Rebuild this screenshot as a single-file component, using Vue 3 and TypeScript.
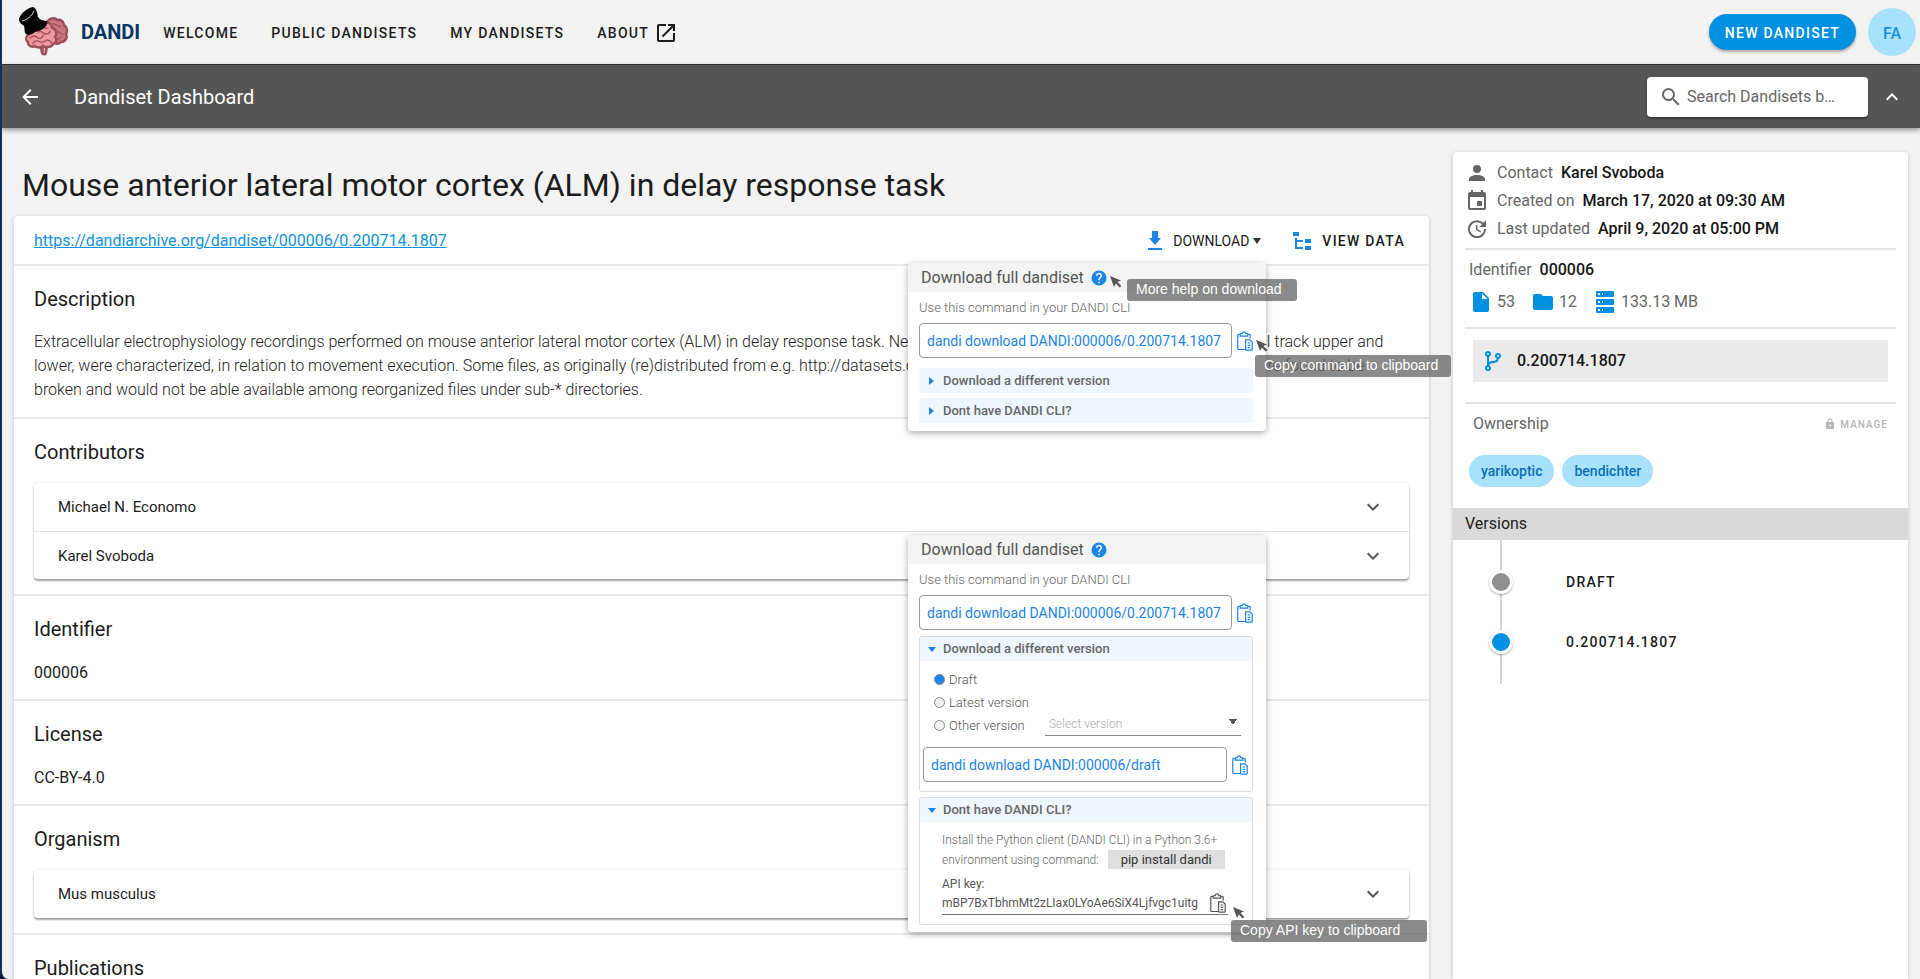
<script setup lang="ts">
import { ref } from 'vue'

const icons = {
  openInNew: 'M14,3V5H17.59L7.76,14.83L9.17,16.24L19,6.41V10H21V3M19,19H5V5H12V3H5C3.89,3 3,3.9 3,5V19A2,2 0 0,0 5,21H19A2,2 0 0,0 21,19V12H19V19Z',
  arrowLeft: 'M20,11V13H8L13.5,18.5L12.08,19.92L4.16,12L12.08,4.08L13.5,5.5L8,11H20Z',
  magnify: 'M9.5,3A6.5,6.5 0 0,1 16,9.5C16,11.11 15.41,12.59 14.44,13.73L14.71,14H15.5L20.5,19L19,20.5L14,15.5V14.71L13.73,14.44C12.59,15.41 11.11,16 9.5,16A6.5,6.5 0 0,1 3,9.5A6.5,6.5 0 0,1 9.5,3M9.5,5C7,5 5,7 5,9.5C5,12 7,14 9.5,14C12,14 14,12 14,9.5C14,7 12,5 9.5,5Z',
  chevronUp: 'M7.41,15.41L12,10.83L16.59,15.41L18,14L12,8L6,14L7.41,15.41Z',
  chevronDown: 'M7.41,8.58L12,13.17L16.59,8.58L18,10L12,16L6,10L7.41,8.58Z',
  download: 'M5,21H19V19H5M18,9H15V2H9V9H6L12,16L18,9Z',
  fileTree: 'M3,3H9V7H3V3M15,10H21V14H15V10M15,17H21V21H15V17M13,13H7V18H13V20H7L5,20V9H7V11H13V13Z',
  help: 'M15.07,11.25L14.17,12.17C13.45,12.89 13,13.5 13,15H11V14.5C11,13.39 11.45,12.39 12.17,11.67L13.41,10.41C13.78,10.05 14,9.55 14,9C14,7.89 13.1,7 12,7A2,2 0 0,0 10,9H8A4,4 0 0,1 12,5A4,4 0 0,1 16,9C16,9.88 15.64,10.67 15.07,11.25M13,19H11V17H13M12,2A10,10 0 0,0 2,12A10,10 0 0,0 12,22A10,10 0 0,0 22,12C22,6.47 17.5,2 12,2Z',
  account: 'M12,4A4,4 0 0,1 16,8A4,4 0 0,1 12,12A4,4 0 0,1 8,8A4,4 0 0,1 12,4M12,14C16.42,14 20,15.79 20,18V20H4V18C4,15.79 7.58,14 12,14Z',
  calendar: 'M19,19H5V8H19M16,1V3H8V1H6V3H5C3.89,3 3,3.89 3,5V19A2,2 0 0,0 5,21H19A2,2 0 0,0 21,19V5C21,3.89 20.1,3 19,3H18V1M17,12H12V17H17V12Z',
  update: 'M21,10.12H14.22L16.96,7.3C14.23,4.6 9.81,4.5 7.08,7.2C4.35,9.91 4.35,14.28 7.08,17C9.81,19.7 14.23,19.7 16.96,17C18.32,15.65 19,14.08 19,12.1H21C21,14.08 20.12,16.65 18.36,18.39C14.85,21.87 9.15,21.87 5.64,18.39C2.14,14.92 2.11,9.28 5.62,5.81C9.13,2.34 14.76,2.34 18.27,5.81L21,3V10.12M12.5,8V12.25L16,14.33L15.28,15.54L11,13V8H12.5Z',
  file: 'M13,9V3.5L18.5,9M6,2C4.89,2 4,2.89 4,4V20A2,2 0 0,0 6,22H18A2,2 0 0,0 20,20V8L14,2H6Z',
  folder: 'M10,4H4C2.89,4 2,4.89 2,6V18A2,2 0 0,0 4,20H20A2,2 0 0,0 22,18V8C22,6.89 21.1,6 20,6H12L10,4Z',
  server: 'M4,1H20A1,1 0 0,1 21,2V6A1,1 0 0,1 20,7H4A1,1 0 0,1 3,6V2A1,1 0 0,1 4,1M4,9H20A1,1 0 0,1 21,10V14A1,1 0 0,1 20,15H4A1,1 0 0,1 3,14V10A1,1 0 0,1 4,9M4,17H20A1,1 0 0,1 21,18V22A1,1 0 0,1 20,23H4A1,1 0 0,1 3,22V18A1,1 0 0,1 4,17M9,5H10V3H9V5M9,13H10V11H9V13M9,21H10V19H9V21M5,3V5H7V3H5M5,11V13H7V11H5M5,19V21H7V19H5Z',
  branch: 'M13,14C9.64,14 8.54,15.35 8.18,16.24C9.25,16.7 10,17.76 10,19A3,3 0 0,1 7,22A3,3 0 0,1 4,19C4,17.69 4.83,16.58 6,16.17V7.83C4.83,7.42 4,6.31 4,5A3,3 0 0,1 7,2A3,3 0 0,1 10,5C10,6.31 9.17,7.42 8,7.83V13.12C8.88,12.47 10.16,12 12,12C14.67,12 15.56,10.66 15.85,9.77C14.77,9.32 14,8.25 14,7A3,3 0 0,1 17,4A3,3 0 0,1 20,7C20,8.34 19.12,9.5 17.91,9.86C17.65,11.29 16.68,14 13,14M7,18A1,1 0 0,0 6,19A1,1 0 0,0 7,20A1,1 0 0,0 8,19A1,1 0 0,0 7,18M7,4A1,1 0 0,0 6,5A1,1 0 0,0 7,6A1,1 0 0,0 8,5A1,1 0 0,0 7,4M17,6A1,1 0 0,0 16,7A1,1 0 0,0 17,8A1,1 0 0,0 18,7A1,1 0 0,0 17,6Z',
  lock: 'M12,17A2,2 0 0,0 14,15C14,13.89 13.1,13 12,13A2,2 0 0,0 10,15A2,2 0 0,0 12,17M18,8A2,2 0 0,1 20,10V20A2,2 0 0,1 18,22H6A2,2 0 0,1 4,20V10C4,8.89 4.9,8 6,8H7V6A5,5 0 0,1 12,1A5,5 0 0,1 17,6V8H18M12,3A3,3 0 0,0 9,6V8H15V6A3,3 0 0,0 12,3Z',
}
const clipboard = 'M11 18.5H1.7Q.8 18.5 .8 17.6V4.2Q.8 3.3 1.7 3.3H3.2M10.8 3.3H12.3Q13.2 3.3 13.2 4.2V7.5M3.2 5.2V3.4Q3.2 2.6 4 2.6H5.2Q5.6 .8 7 .8Q8.4 .8 8.8 2.6H10Q10.8 2.6 10.8 3.4V5.2Z'
const clipboardPage = 'M8.6 8.8H12.8L15.2 11V18.2Q15.2 19.2 14.2 19.2H9.6Q8.6 19.2 8.6 18.2ZM10.6 12H13.2M10.6 14.3H13.2M10.6 16.6H13.2'
const cursor = 'M0 0L11 4.4L7.4 6L11.4 10L9.6 11.6L5.8 7.6L4 11Z'

const version = '0.200714.1807'
const command = `dandi download DANDI:000006/${version}`
const choice = ref('draft')
const picked = ref('')
const people = ['Michael N. Economo', 'Karel Svoboda']
const choices = [
  { id: 'draft', label: 'Draft' },
  { id: 'latest', label: 'Latest version' },
  { id: 'other', label: 'Other version' },
]
</script>

<template>
  <div class="page">
    <header class="topbar">
      <svg class="logo" viewBox="0 0 52 52" aria-hidden="true">
        <g stroke="#9c4d57" stroke-width="2.4" stroke-linejoin="round">
          <path d="M29 16C31 12 37 11 39 14C43 13 46 16 46 19C49 21 50 25 48 28C50 32 47 36 43 36C41 38 38 38 36 37L29 26Z" fill="#cb757e" />
          <path d="M20 36L23 41L24 47C25 49 28 49 28 46L29 40Z" fill="#f0a0a5" />
          <path d="M10 29C7 31 8 35 10 36C10 40 14 42 17 40C19 42 23 42 25 40C29 42 34 41 35 38C39 37 39 33 37 31C40 27 37 22 34 22C34 17 28 15 25 18L16 24Z" fill="#f0979d" />
        </g>
        <path d="M12 32C15 29 18 30 20 32C23 33 25 31 25 29M15 38C15 35 19 34 22 36C25 37 27 35 29 34C32 34 33 36 34 37M20 26C23 24 25 27 27 28C30 28 32 27 32 25M26 19C25 22 28 23 30 22M36 18C38 20 41 18 42 21M40 25C41 28 44 27 45 29M39 33C41 33 43 32 43 31M25 46L25 39" fill="none" stroke="#9c4d57" stroke-width="1.3" stroke-linecap="round" />
        <path d="M1 13C3 7 9 2 15 1C18 2 19 5 20 11C22 14 26 15 29 15C31 21 22 25 17 26C15 28 11 30 8 28C6 26 7 23 6 20C4 18 1 17 1 13Z" fill="#050505" />
        <path d="M4 15C9 14 14 10 16 5" fill="none" stroke="#ddd" stroke-width="1" />
      </svg>
      <strong class="brand">DANDI</strong>
      <nav class="nav">
        <a href="#">WELCOME</a>
        <a href="#">PUBLIC DANDISETS</a>
        <a href="#">MY DANDISETS</a>
        <a href="#">ABOUT <svg class="i24" viewBox="0 0 24 24"><path :d="icons.openInNew" /></svg></a>
      </nav>
      <button class="new-btn">NEW DANDISET</button>
      <button class="avatar">FA</button>
    </header>

    <div class="subbar">
      <button class="icon-btn" aria-label="Back"><svg class="i24" viewBox="0 0 24 24"><path :d="icons.arrowLeft" /></svg></button>
      <span class="subbar-title">Dandiset Dashboard</span>
      <label class="search">
        <svg class="i24" viewBox="0 0 24 24"><path :d="icons.magnify" /></svg>
        <input type="text" aria-label="Search Dandisets" placeholder="Search Dandisets b…" />
      </label>
      <button class="icon-btn" aria-label="Collapse"><svg class="i24" viewBox="0 0 24 24"><path :d="icons.chevronUp" /></svg></button>
    </div>

    <div class="body">
      <main class="main">
        <h1>Mouse anterior lateral motor cortex (ALM) in delay response task</h1>
        <div class="card">
          <div class="card-head">
            <a class="link" href="#">https://dandiarchive.org/dandiset/000006/0.200714.1807</a>
            <button class="dl-btn"><svg class="i24 blue" viewBox="0 0 24 24"><path :d="icons.download" /></svg>DOWNLOAD<span class="caret"></span></button>
            <button class="view-btn"><svg class="i24 blue" viewBox="0 0 24 24"><path :d="icons.fileTree" /></svg>VIEW DATA</button>
          </div>

          <section>
            <h2>Description</h2>
            <p class="description">Extracellular electrophysiology recordings performed on mouse anterior lateral motor cortex (ALM) in delay response task. Neural activity from two neuron populations, pyramidal track upper and lower, were characterized, in relation to movement execution. Some files, as originally (re)distributed from e.g. http://datasets.datalad.org/?dir=/labs/svoboda/Economo_2018 were found to be broken and would not be able available among reorganized files under sub-* directories.</p>
          </section>
          <section>
            <h2>Contributors</h2>
            <div class="panels">
              <button v-for="p in people" :key="p" class="panel">{{ p }}<svg class="i24" viewBox="0 0 24 24"><path :d="icons.chevronDown" /></svg></button>
            </div>
          </section>
          <section>
            <h2>Identifier</h2>
            <p class="value">000006</p>
          </section>
          <section>
            <h2>License</h2>
            <p class="value">CC-BY-4.0</p>
          </section>
          <section>
            <h2>Organism</h2>
            <div class="panels">
              <button class="panel">Mus musculus<svg class="i24" viewBox="0 0 24 24"><path :d="icons.chevronDown" /></svg></button>
            </div>
          </section>
          <section>
            <h2>Publications</h2>
          </section>

          <div class="popup popup-closed">
            <div class="popup-head">Download full dandiset
              <button class="bare blue" aria-label="Help"><svg class="i18" viewBox="0 0 24 24"><path :d="icons.help" /></svg></button>
            </div>
            <div class="popup-body">
              <label for="cmd-a" class="hint">Use this command in your DANDI CLI</label>
              <div class="cmd-row">
                <input id="cmd-a" class="cmd" readonly :value="command" />
                <button class="bare blue" aria-label="Copy command"><svg class="clip" viewBox="0 0 16 20"><path :d="clipboard" /><path :d="clipboardPage" class="clip-page" /></svg></button>
              </div>
              <details><summary>Download a different version</summary></details>
              <details><summary>Dont have DANDI CLI?</summary></details>
            </div>
            <svg class="cursor cursor-help" viewBox="0 0 12 12"><path :d="cursor" /></svg>
            <div class="tip tip-help" role="tooltip">More help on download</div>
            <svg class="cursor cursor-copy" viewBox="0 0 12 12"><path :d="cursor" /></svg>
            <div class="tip tip-copy" role="tooltip">Copy command to clipboard</div>
          </div>

          <div class="popup popup-open">
            <div class="popup-head">Download full dandiset
              <button class="bare blue" aria-label="Help"><svg class="i18" viewBox="0 0 24 24"><path :d="icons.help" /></svg></button>
            </div>
            <div class="popup-body">
              <label for="cmd-b" class="hint">Use this command in your DANDI CLI</label>
              <div class="cmd-row">
                <input id="cmd-b" class="cmd" readonly :value="command" />
                <button class="bare blue" aria-label="Copy command"><svg class="clip" viewBox="0 0 16 20"><path :d="clipboard" /><path :d="clipboardPage" class="clip-page" /></svg></button>
              </div>
              <details open>
                <summary>Download a different version</summary>
                <div class="versions-form">
                  <div class="radios">
                    <label v-for="c in choices" :key="c.id"><input v-model="choice" type="radio" name="version" :value="c.id" />{{ c.label }}</label>
                  </div>
                  <select v-model="picked" aria-label="Select version">
                    <option value="">Select version</option>
                    <option :value="version">{{ version }}</option>
                  </select>
                </div>
                <div class="cmd-row cmd-row-inner">
                  <input class="cmd" aria-label="Draft download command" readonly value="dandi download DANDI:000006/draft" />
                  <button class="bare blue" aria-label="Copy draft command"><svg class="clip" viewBox="0 0 16 20"><path :d="clipboard" /><path :d="clipboardPage" class="clip-page" /></svg></button>
                </div>
              </details>
              <details open>
                <summary>Dont have DANDI CLI?</summary>
                <div class="cli">
                  <p>Install the Python client (DANDI CLI) in a Python 3.6+<br />environment using command: <code>pip install dandi</code></p>
                  <label for="api-key">API key:</label>
                  <div class="key-row">
                    <input id="api-key" readonly value="mBP7BxTbhmMt2zLIax0LYoAe6SiX4Ljfvgc1uitg" />
                    <button class="bare" aria-label="Copy API key"><svg class="clip" viewBox="0 0 16 20"><path :d="clipboard" /><path :d="clipboardPage" class="clip-page" /></svg></button>
                  </div>
                </div>
              </details>
            </div>
            <svg class="cursor cursor-key" viewBox="0 0 12 12"><path :d="cursor" /></svg>
            <div class="tip tip-key" role="tooltip">Copy API key to clipboard</div>
          </div>
        </div>
      </main>

      <aside class="side">
        <div class="side-block facts">
          <div class="fact"><svg class="i24" viewBox="0 0 24 24"><path :d="icons.account" /></svg>Contact <b>Karel Svoboda</b></div>
          <div class="fact"><svg class="i24" viewBox="0 0 24 24"><path :d="icons.calendar" /></svg>Created on <b>March 17, 2020 at 09:30 AM</b></div>
          <div class="fact"><svg class="i24" viewBox="0 0 24 24"><path :d="icons.update" /></svg>Last updated <b>April 9, 2020 at 05:00 PM</b></div>
        </div>
        <div class="side-block ident">
          <div class="ident-line">Identifier <b>000006</b></div>
          <div class="stats">
            <span><svg class="i24 accent" viewBox="0 0 24 24"><path :d="icons.file" /></svg>53</span>
            <span><svg class="i24 accent" viewBox="0 0 24 24"><path :d="icons.folder" /></svg>12</span>
            <span><svg class="i24 accent" viewBox="0 0 24 24"><path :d="icons.server" /></svg>133.13 MB</span>
          </div>
        </div>
        <div class="side-block current">
          <div class="current-box"><svg class="i24 accent" viewBox="0 0 24 24"><path :d="icons.branch" /></svg><b>{{ version }}</b></div>
        </div>
        <div class="owners">
          <div class="owners-head">Ownership
            <button class="manage" disabled><svg viewBox="0 0 24 24"><path :d="icons.lock" /></svg>MANAGE</button>
          </div>
          <div class="chips"><span>yarikoptic</span><span>bendichter</span></div>
        </div>
        <h3>Versions</h3>
        <ol class="timeline">
          <li><i class="dot"></i><button>DRAFT</button></li>
          <li><i class="dot dot-on"></i><button>{{ version }}</button></li>
        </ol>
      </aside>
    </div>
  </div>
</template>

<style>
body { margin: 0; background: #0b1a3a; }
</style>

<style scoped>
* { box-sizing: border-box; }
.page { height: 100vh; overflow: hidden; display: flex; flex-direction: column; background: #f2f2f2; border-left: 2px solid #16305c; border-bottom-left-radius: 8px; font-family: Roboto, "Liberation Sans", sans-serif; font-size: 16px; line-height: 24px; color: #1c1c1c; }
button, input, select { font-family: inherit; color: inherit; margin: 0; }
button { border: 0; background: none; padding: 0; }
svg { display: block; fill: currentColor; flex: none; }
.i24 { width: 24px; height: 24px; }
.i18 { width: 18px; height: 18px; }
.blue { color: #1a84e8; }
.accent { color: #0090e1; }
b { font-weight: 500; color: #151515; }

.topbar { flex: none; height: 65px; display: flex; align-items: center; padding: 0 4px 0 16px; border-bottom: 1px solid #303030; }
.logo { width: 52px; height: 52px; }
.brand { margin-left: 11px; font-size: 20px; color: #06355f; }
.nav { display: flex; flex: 1; margin-left: 23px; padding-top: 2px; gap: 33px; font-size: 14px; font-weight: 500; letter-spacing: .09em; }
.nav a { display: flex; align-items: center; gap: 5px; color: #1c1c1c; text-decoration: none; }
.new-btn { height: 36px; padding: 1px 16px 0; border-radius: 18px; background: #0090e1; color: #fff; font-size: 14px; font-weight: 500; letter-spacing: .09em; box-shadow: 0 2px 3px rgba(0, 0, 0, .3); }
.avatar { width: 48px; height: 48px; margin-left: 12px; padding-top: 2px; border-radius: 50%; background: #a8e1fb; color: #1390de; font-size: 16px; font-weight: 500; }

.subbar { flex: none; height: 63px; display: flex; align-items: center; padding: 0 16px; background: #555; color: #fff; box-shadow: 0 2px 5px rgba(0, 0, 0, .4); position: relative; }
.subbar-title { margin-left: 32px; flex: 1; font-size: 20px; }
.search { display: flex; align-items: center; gap: 4px; width: 221px; height: 40px; padding: 0 12px; border-radius: 4px; background: #fff; color: #666; box-shadow: 0 2px 2px rgba(0, 0, 0, .35); }
.search input { flex: 1; min-width: 0; border: 0; outline: 0; padding: 0; background: none; font-size: 16px; }
.search input::placeholder { color: #666; opacity: 1; }
.search + .icon-btn { margin-left: 12px; }

.body { flex: 1; min-height: 0; display: flex; gap: 24px; padding: 24px 12px 0; }
.main { flex: 1; min-width: 0; }
h1 { margin: 13px 8px 10px; font-size: 32px; line-height: 41px; font-weight: 400; }
.card { position: relative; background: #fff; border-radius: 4px; box-shadow: 0 1px 4px rgba(0, 0, 0, .2); }
.card-head { display: flex; align-items: center; height: 48px; padding: 2px 24px 0 20px; }
.link { flex: 1; color: #0d92e0; }
.dl-btn, .view-btn { display: flex; align-items: center; font-size: 14px; }
.dl-btn svg { margin-right: 6px; }
.view-btn svg { margin-right: 8px; }
.view-btn { margin-left: 29px; font-weight: 500; letter-spacing: .09em; }
.caret { margin-left: 4px; border: 4px solid transparent; border-top: 6px solid #333; border-bottom: 0; }
section { padding: 19px 20px 15px; border-top: 2px solid #e8e8e8; }
h2 { margin: 0; font-size: 20px; line-height: 28px; font-weight: 400; }
.description { margin: 17px 20px 0 0; font-weight: 300; color: #222; }
section:has(.value) { height: 105px; }
.value { margin: 18px 0 0; font-size: 16px; }
.panels { margin-top: 17px; border-radius: 4px; box-shadow: 0 2px 2px rgba(0, 0, 0, .35), 0 0 3px rgba(0, 0, 0, .12); }
.panel { display: flex; align-items: center; justify-content: space-between; width: 100%; height: 48px; padding: 0 24px; font-size: 15px; }
.panel svg { color: #555; }
.panel + .panel { border-top: 1px solid #e2e2e2; }

.popup { position: absolute; right: 163px; width: 358px; background: #fff; border-radius: 4px; box-shadow: 0 2px 7px rgba(0, 0, 0, .35); color: #555; }
.popup-closed { top: 47px; }
.popup-open { top: 319px; }
.popup-head { display: flex; align-items: center; gap: 6px; height: 29px; padding-left: 13px; background: #f3f3f3; border-radius: 4px 4px 0 0; font-size: 16px; }
.popup-body { display: flex; flex-direction: column; gap: 5px; padding: 6px 13px 8px 11px; }
.hint { font-size: 13px; font-weight: 300; line-height: 20px; color: #666; }
.cmd-row { display: flex; align-items: center; justify-content: space-between; margin-bottom: 5px; }
.popup-open .cmd-row { margin-bottom: 1px; }
.cmd { width: 313px; height: 35px; padding: 0 7px; border: 1px solid #999; border-radius: 4px; outline: 0; background: #fff; font-size: 14px; color: #1a84e8; }
.clip { width: 16px; height: 20px; fill: none; stroke: currentColor; stroke-width: 1.2; }
.clip-page { fill: #fff; }
details { border-radius: 3px; }
summary { display: flex; align-items: center; height: 25px; padding-left: 10px; background: #eff6fd; border-radius: 3px; font-size: 13px; font-weight: 500; color: #666; list-style: none; }
summary::before { content: ""; width: 0; margin-right: 9px; border: 4px solid transparent; border-left: 5px solid #1a84e8; border-right: 0; }
details[open] { border: 1px solid #ddd; }
details[open] summary { height: 24px; padding-left: 8px; }
details[open] summary::before { margin-right: 7px; border: 4px solid transparent; border-top: 5px solid #1a84e8; border-bottom: 0; }
.versions-form { display: flex; align-items: flex-end; justify-content: space-between; padding: 7px 11px 10px 14px; font-size: 13px; font-weight: 300; }
.radios label { display: flex; align-items: center; gap: 4px; height: 23px; }
.radios input { appearance: none; width: 11px; height: 11px; border: 1px solid #888; border-radius: 50%; background: #f0f0f0; }
.radios input:checked { background: #1a84e8; }
.versions-form select { appearance: none; width: 196px; height: 24px; margin-bottom: 1px; padding: 0 4px; border: 0; border-bottom: 1px solid #888; border-radius: 0; font-size: 12px; font-weight: 300; color: #aaa; background: linear-gradient(to bottom right, #555 50%, transparent 50%) 188px 7px / 4px 6px no-repeat, linear-gradient(to bottom left, #555 50%, transparent 50%) 184px 7px / 4px 6px no-repeat; }
.popup-open .cmd-row-inner { padding: 0 4px 0 3px; margin-bottom: 9px; }
.cmd-row-inner .cmd { width: 304px; }
.popup-open .popup-body { padding-bottom: 7px; }
.cli { padding: 9px 24px 9px 22px; font-size: 12px; line-height: 19px; font-weight: 300; }
.cli p { margin: 0 0 6px; color: #666; white-space: nowrap; }
.cli code { display: inline-block; margin-left: 6px; padding: 0 13px; background: #dedede; font-family: inherit; font-size: 13px; font-weight: 400; color: #333; }
.cli label { display: block; font-weight: 400; line-height: 16px; }
.key-row { display: flex; align-items: center; justify-content: space-between; height: 23px; padding-right: 2px; border-bottom: 1px solid #777; }
.key-row input { width: 262px; border: 0; outline: 0; padding: 0; font-size: 12px; background: none; }
.cursor { position: absolute; width: 12px; height: 12px; fill: #555; }
.tip { position: absolute; height: 22px; padding: 0 9px; border-radius: 3px; background: rgba(99, 99, 99, .75); color: #fff; font-family: "Liberation Sans", Arial, sans-serif; font-size: 14px; line-height: 21px; white-space: nowrap; }
.cursor-help { left: 202px; top: 13px; }
.tip-help { left: 219px; top: 16px; width: 170px; }
.cursor-copy { left: 348px; top: 77px; }
.tip-copy { left: 347px; top: 92px; width: 196px; }
.cursor-key { left: 325px; top: 372px; }
.tip-key { left: 323px; top: 385px; width: 196px; }

.side { width: 455px; flex: none; background: #fff; border-radius: 4px 4px 0 0; box-shadow: 0 1px 4px rgba(0, 0, 0, .2); color: #666; }
.side-block { margin: 0 12px; border-bottom: 2px solid #e4e4e4; }
.facts { padding: 7px 0 5px; }
.fact { display: flex; align-items: center; height: 28px; }
.fact b { margin-left: 8px; }
.ident-line b { margin-left: 4px; }
.fact svg { margin-right: 8px; }
.ident { height: 79px; padding: 8px 4px 0; }
.stats { display: flex; gap: 16px; margin-top: 8px; }
.stats span { display: flex; align-items: center; gap: 4px; }
.current { height: 75px; padding: 11px 8px 0; }
.current-box { display: flex; align-items: center; gap: 12px; height: 42px; padding-left: 8px; background: #eaeaea; }
.owners { height: 104px; padding: 8px 16px 0; }
.owners-head { display: flex; align-items: center; justify-content: space-between; padding: 0 4px; }
.manage { display: flex; align-items: center; gap: 4px; font-size: 10px; font-weight: 500; letter-spacing: 1px; color: #b5b5b5; }
.manage svg { width: 12px; height: 12px; }
.chips { display: flex; gap: 8px; margin-top: 19px; }
.chips span { height: 32px; padding: 0 12px; border-radius: 16px; background: #a8e1fb; color: #0a6db5; font-size: 14px; font-weight: 500; line-height: 32px; }
h3 { margin: 0; height: 32px; padding-left: 12px; background: #d9d9d9; color: #1c1c1c; font-size: 16px; font-weight: 400; line-height: 32px; }
.timeline { margin: 0 0 0 36px; padding: 12px 0; list-style: none; background: linear-gradient(#d5d5d5, #d5d5d5) 11px 0 / 2px 100% no-repeat; }
.timeline li { display: flex; align-items: center; gap: 53px; height: 60px; }
.timeline button { font-size: 14px; font-weight: 500; letter-spacing: .09em; color: #1c1c1c; }
.dot { width: 24px; height: 24px; border: 3px solid #fff; border-radius: 50%; background: #8f8f8f; box-shadow: 0 1px 2px rgba(0, 0, 0, .35); }
.dot-on { background: #0090e1; }
</style>
